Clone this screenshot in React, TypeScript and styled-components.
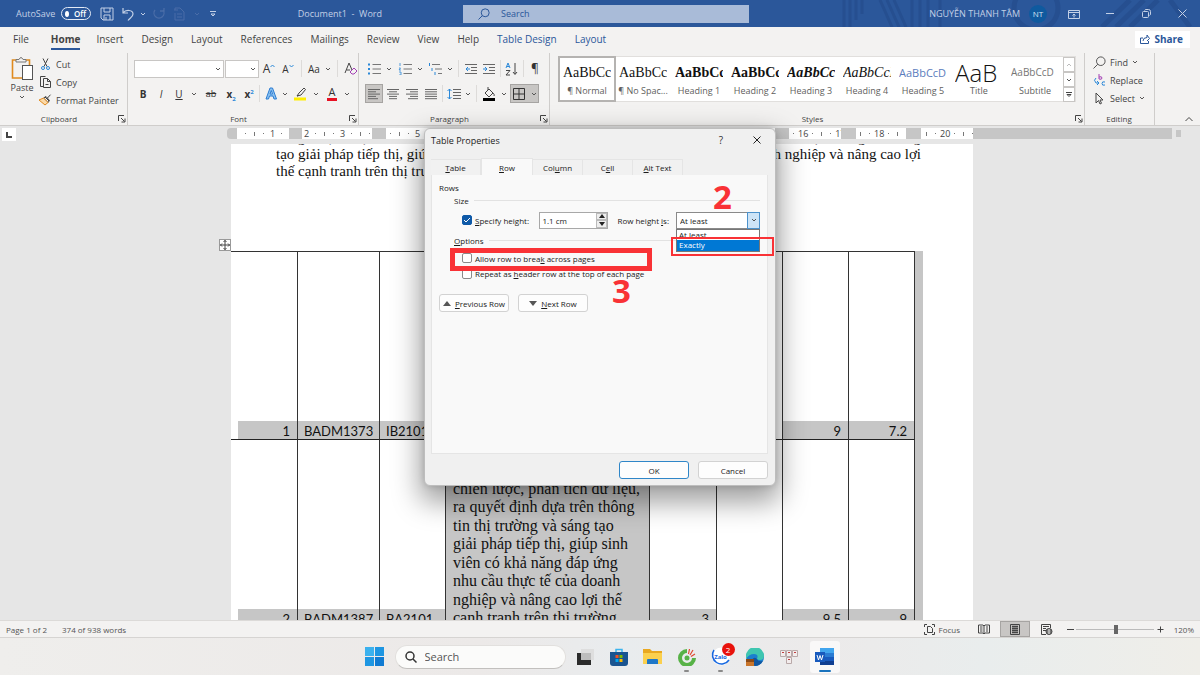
import React from "react";
import styled, { createGlobalStyle, css } from "styled-components";

const ui = `"Open Sans", "Noto Sans", sans-serif`;
const serif = `"Liberation Serif", serif`;

const Global = createGlobalStyle`
  *, *::before, *::after { box-sizing: border-box; }
  html, body, #root { height: 100%; }
  body { margin: 0; font-family: ${ui}; font-size: 9px; color: #444; overflow: hidden; }
  button, input, select { font: inherit; color: inherit; margin: 0; padding: 0; border: 0; background: none; }
  p, ul { margin: 0; padding: 0; list-style: none; }
`;

const Shell = styled.div`
  display: flex;
  flex-direction: column;
  height: 100vh;
`;

/* ---------- title bar ---------- */
const TitleBar = styled.header`
  position: relative;
  display: grid;
  grid-template-columns: 463px minmax(120px, 286px) 1fr;
  align-items: center;
  height: 27px;
  flex: none;
  background: #2b579a;
  color: #c3d0e6;
`;
const TitleArt = styled.svg`
  position: absolute;
  right: 0;
  top: 0;
`;
const QuickAccess = styled.div`
  display: flex;
  align-items: center;
  padding-left: 16px;
`;
const AutoSave = styled.span`
  width: 45px;
`;
const Toggle = styled.button`
  display: flex;
  align-items: center;
  gap: 5px;
  width: 30px;
  height: 13px;
  padding: 0 4px 0 3px;
  margin-right: 6px;
  border: 1px solid #e3eaf5;
  border-radius: 7px;
  color: #fff;
  font-size: 8px;
  font-weight: 600;
  &::before { content: ""; width: 6px; height: 6px; border-radius: 50%; background: #fff; }
`;
const DocName = styled.span`
  margin-left: auto;
  padding-right: 81px;
  white-space: pre;
`;
const SearchBox = styled.label`
  display: flex;
  align-items: center;
  gap: 11px;
  height: 18px;
  padding-left: 15px;
  background: #a9bbd8;
  color: #2b579a;
  input { flex: 1; min-width: 0; outline: 0; }
  input::placeholder { color: #2b579a; opacity: 1; }
`;
const Account = styled.div`
  position: relative;
  display: flex;
  align-items: center;
  justify-content: flex-end;
`;
const Avatar = styled.span`
  display: grid;
  place-items: center;
  width: 18px;
  height: 18px;
  margin: 0 9px;
  border-radius: 50%;
  background: #0f5a9f;
  color: #d5e3f2;
  font-size: 8px;
`;
const Plain = styled.button<{ $w?: number; $h?: number; $on?: boolean }>`
  display: flex;
  align-items: center;
  justify-content: center;
  flex: none;
  width: ${(p) => p.$w ?? 18}px;
  height: ${(p) => p.$h ?? 19}px;
  ${(p) => p.$on && css`background: #c8c6c4; border: 1px solid #a6a4a2;`}
`;

/* ---------- tabs ---------- */
const Ribbon = styled.section`
  flex: none;
  background: #f3f2f1;
  border-bottom: 1px solid #cfcdcb;
`;
const Tabs = styled.nav`
  display: flex;
  align-items: center;
  height: 26px;
  padding: 0 10px 2px 4px;
`;
const Tab = styled.button<{ $active?: boolean; $accent?: boolean }>`
  position: relative;
  height: 24px;
  margin: 0 9px;
  font-size: 10px;
  white-space: nowrap;
  ${(p) => p.$accent && css`color: #2b579a;`}
  ${(p) => p.$active && css`
    font-weight: 700;
    margin-left: 13px;
    margin-right: 7px;
    &::after { content: ""; position: absolute; left: 0; right: 0; bottom: 1px; height: 2px; background: #2b579a; }
  `}
`;
const Share = styled.button`
  display: flex;
  align-items: center;
  gap: 4px;
  height: 17px;
  margin-left: auto;
  padding: 0 7px 0 5px;
  background: #fff;
  color: #2b579a;
  font-size: 10px;
  font-weight: 700;
`;

/* ---------- ribbon groups ---------- */
const Groups = styled.div`
  display: flex;
  height: 72px;
`;
const Group = styled.div<{ $w?: number }>`
  display: flex;
  flex-direction: column;
  justify-content: space-between;
  ${(p) => (p.$w ? css`flex: none; width: ${p.$w}px;` : css`flex: 1; min-width: 0;`)}
  border-right: 1px solid #cfcdcb;
`;
const GroupBody = styled.div<{ $pad?: number }>`
  display: flex;
  flex: 1;
  min-width: 0;
  padding-left: ${(p) => p.$pad ?? 6}px;
`;
const GroupLabel = styled.div`
  display: flex;
  align-items: center;
  height: 13px;
  padding-right: 1px;
  font-size: 8px;
  color: #444;
  span { flex: 1; text-align: center; }
`;
const PasteButton = styled.button`
  display: flex;
  flex-direction: column;
  align-items: center;
  width: 32px;
  padding-top: 3px;
  line-height: 12px;
`;
const Stack = styled.div<{ $pad?: number }>`
  display: flex;
  flex-direction: column;
  padding-top: ${(p) => p.$pad ?? 0}px;
`;
const TextButton = styled.button<{ $end?: number }>`
  display: flex;
  align-items: center;
  gap: 4px;
  height: 18px;
  padding-right: ${(p) => p.$end ?? 0}px;
  white-space: nowrap;
`;
const ToolRow = styled.div`
  display: flex;
  align-items: center;
  height: 25px;
`;
const Sep = styled.i<{ $m?: number }>`
  width: 1px;
  height: 17px;
  margin: 0 ${(p) => p.$m ?? 3}px;
  background: #dddbd9;
`;
const Combo = styled.label<{ $w: number }>`
  display: flex;
  align-items: center;
  width: ${(p) => p.$w}px;
  height: 18px;
  padding-right: 2px;
  margin-right: 1px;
  background: #fff;
  border: 1px solid #c8c6c4;
  input { flex: 1; min-width: 0; outline: 0; }
`;
const Glyph = styled.span<{ $size?: number; $bold?: boolean; $italic?: boolean; $line?: string; $color?: string }>`
  font-size: ${(p) => p.$size ?? 10}px;
  line-height: 12px;
  font-weight: ${(p) => (p.$bold ? 700 : 400)};
  font-style: ${(p) => (p.$italic ? "italic" : "normal")};
  text-decoration: ${(p) => p.$line ?? "none"};
  color: ${(p) => p.$color ?? "#333"};
  sub, sup { font-size: 6px; line-height: 0; color: #2b88d8; }
`;
const InkGlyph = styled(Glyph)<{ $ink: string }>`
  padding: 0 2px;
  border-bottom: 3px solid ${(p) => p.$ink};
`;

const Gallery = styled.div`
  display: flex;
  flex: 1;
  min-width: 0;
  height: 46px;
  margin: 3px 8px 0 0;
  background: #fff;
  border: 1px solid #e1dfdd;
`;
const Swatch = styled.button<{ $on?: boolean }>`
  display: flex;
  flex-direction: column;
  align-items: center;
  flex: 0 0 56px;
  height: 44px;
  overflow: hidden;
  line-height: 14px;
  color: #605e5c;
  ${(p) => p.$on && css`outline: 2px solid #b5b3b1; outline-offset: -1px;`}
`;
const Sample = styled.span<{ $font?: string; $size?: number; $bold?: boolean; $italic?: boolean; $light?: boolean; $color?: string }>`
  width: 48px;
  height: 27px;
  line-height: 31px;
  overflow: hidden;
  text-align: left;
  white-space: nowrap;
  font-family: ${(p) => p.$font ?? serif};
  font-size: ${(p) => p.$size ?? 14}px;
  font-weight: ${(p) => (p.$bold ? 700 : p.$light ? 300 : 400)};
  font-style: ${(p) => (p.$italic ? "italic" : "normal")};
  color: ${(p) => p.$color ?? "#111"};
`;
const GalleryScroll = styled.div`
  display: flex;
  flex-direction: column;
  width: 12px;
  margin-left: auto;
  button { flex: 1; width: 12px; border: 1px solid #c8c6c4; }
`;
const Collapse = styled.div`
  display: flex;
  align-items: flex-end;
  justify-content: flex-end;
  width: 45px;
  padding: 0 6px 1px 0;
`;

/* ---------- document ---------- */
const Workspace = styled.main`
  position: relative;
  flex: 1;
  min-height: 0;
  display: flex;
  flex-direction: column;
  background: #e6e6e6;
`;
const Columns = styled.div`
  display: grid;
  grid-template-columns: calc(50% - 369px) 742px 1fr;
`;
const RulerRow = styled(Columns)`
  height: 18px;
  padding-top: 2px;
  flex: none;
`;
const RulerLeft = styled.div`
  display: flex;
  justify-content: space-between;
  padding-left: 2px;
`;
const TabStop = styled.button`
  width: 14px;
  height: 13px;
  display: grid;
  place-items: center;
  background: #fff;
`;
const RulerNub = styled.i`
  width: 4px;
  height: 11px;
  background: #c6c6c6;
  border-radius: 4px 0 0 4px;
`;
const Ruler = styled.div`
  display: flex;
  height: 11px;
  background: #c6c6c6;
`;
const Seg = styled.span<{ $w?: number; $pad?: number }>`
  display: flex;
  align-items: center;
  height: 11px;
  overflow: hidden;
  ${(p) => (p.$w ? css`flex: none; width: ${p.$w}px;` : css`flex: 1;`)}
  padding-left: ${(p) => p.$pad ?? 0}px;
  background: #fff;
  b { flex: 0 0 9px; display: flex; justify-content: center; font-weight: 400; line-height: 11px; }
  b.bar::before { content: ""; width: 1px; height: 4px; background: #777; }
  b.dot::before { content: ""; width: 1px; height: 1px; background: #777; }
`;
const Margin = styled.i<{ $w: number }>`
  flex: 0 0 ${(p) => p.$w}px;
`;
const RulerRight = styled.div`
  display: flex;
  gap: 4px;
  padding-right: 19px;
  &::before { content: ""; flex: 1; height: 11px; background: #c6c6c6; }
  &::after { content: ""; width: 5px; height: 7px; margin-top: 2px; background: #c6c6c6; }
`;
const PageArea = styled(Columns)`
  flex: 1;
  min-height: 0;
`;
const Page = styled.article`
  grid-column: 2;
  position: relative;
  min-height: 0;
  background: #fff;
`;
const PageClip = styled.div`
  height: 100%;
  overflow: hidden;
`;
const Para = styled.div`
  width: 645px;
  margin: -15px 0 71px 45px;
  font-family: ${serif};
  font-size: 15px;
  line-height: 17px;
  color: #111;
  p { white-space: nowrap; text-align-last: justify; }
  p:last-child { text-align-last: left; }
`;
const MoveHandle = styled.button`
  position: absolute;
  left: -12px;
  top: 95px;
  width: 12px;
  height: 12px;
  display: grid;
  place-items: center;
  background: #fff;
  border: 1px solid #999;
`;
const Grid = styled.table`
  table-layout: fixed;
  width: 692px;
  border-spacing: 0;
  font-family: Lato, "Noto Sans", sans-serif;
  font-size: 13px;
  color: #111;
  td { height: 188px; padding: 0; vertical-align: bottom; border-right: 1px solid #333; border-bottom: 1px solid #222; }
  tr:first-child td { height: 189px; border-top: 1px solid #333; }
  td.end { border: 0; background: #c6c6c6; }
  tr:first-child td.end { border: 0; }
`;
const Strip = styled.div<{ $num?: boolean; $indent?: boolean }>`
  height: 18px;
  margin-left: ${(p) => (p.$indent ? 7 : 0)}px;
  padding: 0 7px 0 6px;
  line-height: 20px;
  background: #c6c6c6;
  white-space: nowrap;
  text-align: ${(p) => (p.$num ? "right" : "left")};
`;
const LongCell = styled.td`
  background: #c6c6c6;
  p { padding-left: 7px; font-family: ${serif}; font-size: 16px; line-height: 19px; white-space: nowrap; }
  p:nth-child(even) { line-height: 18px; }
`;

/* ---------- dialog ---------- */
const Dialog = styled.section`
  position: absolute;
  top: 2px;
  left: calc(50% - 176px);
  width: 352px;
  display: flex;
  flex-direction: column;
  padding: 0 7px 6px 6px;
  background: #f0f0f0;
  border-radius: 6px;
  border: 1px solid #bdbdbd;
  box-shadow: 0 12px 28px 4px rgba(0, 0, 0, 0.38), 0 0 6px rgba(0, 0, 0, 0.15);
  color: #1b1b1b;
`;
const DialogHead = styled.header`
  display: flex;
  align-items: center;
  height: 22px;
  margin-bottom: 7px;
  h2 { flex: 1; margin: 0; font-size: 9px; font-weight: 400; }
`;
const DialogTabs = styled.div`
  display: flex;
  align-items: flex-end;
`;
const DialogTab = styled.button<{ $on?: boolean }>`
  width: ${(p) => (p.$on ? 52 : 50)}px;
  height: ${(p) => (p.$on ? 17 : 16)}px;
  font-size: 8px;
  background: ${(p) => (p.$on ? "#f9f9f9" : "#f1f1f1")};
  border: 1px solid #e5e5e5;
  border-bottom: 0;
  border-left-width: ${(p) => (p.$on ? 1 : 0)}px;
`;
const Panel = styled.div`
  height: 279px;
  padding: 6px 7px;
  background: #f9f9f9;
  border: 1px solid #e5e5e5;
  border-top: 0;
  font-size: 8px;
`;
const Legend = styled.div<{ $in?: boolean; $h?: number }>`
  display: flex;
  align-items: center;
  gap: 5px;
  height: ${(p) => p.$h ?? 13}px;
  padding-left: ${(p) => (p.$in ? 15 : 0)}px;
  ${(p) => p.$in && css`&::after { content: ""; flex: 1; height: 1px; background: #e2e2e2; }`}
`;
const FieldRow = styled.div<{ $h: number }>`
  display: flex;
  align-items: center;
  height: ${(p) => p.$h}px;
  padding-left: 23px;
`;
const Check = styled.label<{ $w?: number }>`
  display: flex;
  align-items: center;
  gap: 3px;
  ${(p) => p.$w && css`width: ${p.$w}px;`}
  white-space: nowrap;
  input {
    appearance: none;
    width: 10px;
    height: 10px;
    background: #fff;
    border: 1px solid #8a8a8a;
    border-radius: 2px;
  }
  input:checked {
    background: #0f5aa8 url("data:image/svg+xml,%3Csvg xmlns='http://www.w3.org/2000/svg' viewBox='0 0 10 10'%3E%3Cpath d='M2 5l2 2 4-4' fill='none' stroke='white'/%3E%3C/svg%3E") center / 10px no-repeat;
    border-color: #0f5aa8;
  }
`;
const Spin = styled.div`
  display: flex;
  width: 69px;
  height: 17px;
  margin-right: 9px;
  background: #fff;
  border: 1px solid #a8a8a8;
  input { width: 56px; padding-left: 2px; outline: 0; }
`;
const SpinButtons = styled.div`
  display: flex;
  flex-direction: column;
  width: 12px;
  button { flex: 1; display: grid; place-items: center; background: #eee; border: 1px solid #bbb; min-height: 0; }
`;
const RowLabel = styled.label`
  width: 59px;
  white-space: nowrap;
`;
const Drop = styled.div`
  position: relative;
  flex: none;
  width: 84px;
  height: 17px;
  background: #fff;
  border: 1px solid #8a8a8a;
  select { appearance: none; width: 100%; height: 15px; padding-left: 3px; outline: 0; }
`;
const DropArrow = styled.span`
  position: absolute;
  right: -1px;
  top: -1px;
  width: 13px;
  height: 17px;
  display: grid;
  place-items: center;
  background: #cde4f7;
  border: 1px solid #4c92cc;
  pointer-events: none;
`;
const DropList = styled.ul`
  position: absolute;
  left: -1px;
  right: -1px;
  top: 16px;
  height: 23px;
  background: #fff;
  border: 1px solid #777;
  li { height: 10px; padding-left: 2px; line-height: 10px; overflow: hidden; }
  li + li { height: 11px; background: #0078d4; color: #fff; }
`;
const NavButtons = styled.div`
  display: flex;
  gap: 9px;
  padding-top: 15px;
`;
const WinButton = styled.button<{ $primary?: boolean }>`
  display: flex;
  align-items: center;
  justify-content: center;
  gap: 4px;
  width: 70px;
  height: 18px;
  background: #fdfdfd;
  border: 1px solid ${(p) => (p.$primary ? "#2f86c8" : "#d2d2d2")};
  border-radius: 3px;
  font-size: 8px;
`;
const DialogFoot = styled.footer`
  display: flex;
  justify-content: flex-end;
  gap: 9px;
  padding-top: 7px;
`;
const Outline = styled.i<{ $x: number; $y: number; $w: number; $h: number; $b: number }>`
  position: absolute;
  left: ${(p) => p.$x}px;
  top: ${(p) => p.$y}px;
  width: ${(p) => p.$w}px;
  height: ${(p) => p.$h}px;
  border: ${(p) => p.$b}px solid #f93236;
  pointer-events: none;
`;
const StepMark = styled.strong<{ $x: number; $y: number }>`
  position: absolute;
  left: ${(p) => p.$x}px;
  top: ${(p) => p.$y}px;
  color: #f93236;
  font-size: 33px;
  line-height: 36px;
  font-weight: 700;
`;

/* ---------- status bar and taskbar ---------- */
const Status = styled.footer`
  display: flex;
  align-items: center;
  flex: none;
  height: 18px;
  padding: 0 6px;
  background: #f3f2f1;
  border-bottom: 1px solid #d6d4d2;
  border-top: 1px solid #dcdad8;
  font-size: 8px;
  color: #555;
`;
const Words = styled.span`
  margin: 0 auto 0 15px;
`;
const Zoom = styled.input`
  appearance: none;
  width: 78px;
  height: 10px;
  background: linear-gradient(#bbb, #bbb) center / 100% 1px no-repeat;
  &::-webkit-slider-thumb { appearance: none; width: 4px; height: 9px; background: #666; }
`;
const Percent = styled.span`
  width: 27px;
  text-align: right;
`;
const Taskbar = styled.nav`
  display: flex;
  align-items: center;
  justify-content: center;
  flex: none;
  height: 37px;
  padding-left: 4px;
  background: linear-gradient(90deg, #efeeec 0%, #ece9e8 40%, #e9ecee 52%, #eceaea 68%, #e9eded 82%, #efeee9 100%);
`;
const TaskSearch = styled.label`
  display: flex;
  align-items: center;
  gap: 8px;
  width: 171px;
  height: 24px;
  margin: 0 2px 0 11px;
  padding-left: 9px;
  background: #fbfbfa;
  border: 1px solid #e2e0de;
  border-bottom-color: #c2c0be;
  border-radius: 12px;
  font-size: 11px;
  input { flex: 1; min-width: 0; outline: 0; }
  input::placeholder { color: #555; opacity: 1; }
`;
const TaskApp = styled.button<{ $state?: "open" | "active" }>`
  position: relative;
  display: grid;
  place-items: center;
  flex: none;
  width: 34px;
  height: 32px;
  ${(p) => p.$state === "active" && css`
    width: 30px;
    margin-left: 4px;
    background: #f9f8f8;
    border-radius: 3px;
  `}
  ${(p) => p.$state && css`
    &::after {
      content: "";
      position: absolute;
      bottom: 1px;
      width: ${p.$state === "active" ? 12 : 5}px;
      height: 2px;
      border-radius: 1px;
      background: ${p.$state === "active" ? "#1a73bd" : "#8a8a8a"};
    }
  `}
`;
const Badge = styled.span`
  position: absolute;
  right: 3px;
  top: 2px;
  width: 13px;
  height: 13px;
  border-radius: 50%;
  background: #e8120c;
  color: #fff;
  font-size: 8px;
  line-height: 13px;
`;
const ZaloName = styled.span`
  position: absolute;
  font-size: 6px;
  font-weight: 700;
  color: #1567e0;
`;

/* ---------- drawings ---------- */
type IconProps = { w: number; h: number; c?: string; sw?: number; children: React.ReactNode };
const Icon = ({ w, h, c = "#444", sw = 1, children }: IconProps) => (
  <svg width={w} height={h} viewBox={`0 0 ${w} ${h}`} fill="none" stroke={c} strokeWidth={sw} aria-hidden="true">
    {children}
  </svg>
);
const Chevron = ({ c = "#555" }: { c?: string }) => (
  <Icon w={6} h={6} c={c}><path d="M1 2l2 2 2-2" /></Icon>
);
const Launcher = () => (
  <Icon w={8} h={8}><path d="M.5 6V.5H6M3 3l3.500 3.500M7 3.500V7H3.500" /></Icon>
);
const Lens = ({ c = "#2b579a", size = 12 }: { c?: string; size?: number }) => (
  <Icon w={size} h={size} c={c}><circle cx={size * 0.6} cy={size * 0.4} r={size * 0.33} /><path d={`M${size * 0.37} ${size * 0.63}L.5 ${size - 0.5}`} /></Icon>
);
const Lines = ({ rows }: { rows: [number, number][] }) => (
  <Icon w={12} h={12} c="#666"><path d={rows.map(([a, b], i) => `M${a} ${1.5 + i * 2.3}H${b}`).join("")} /></Icon>
);
const bulletLines = "M5.500 1.500H14M5.500 6H14M5.500 10.500H14";

const Key = ({ label }: { label: string }) => {
  const letter = label.charAt(0);
  return <><u>{letter}</u>{label.slice(1)}</>;
};

const ribbonTabs: { name: string; active?: boolean; accent?: boolean }[] = [
  { name: "File" }, { name: "Home", active: true }, { name: "Insert" }, { name: "Design" }, { name: "Layout" },
  { name: "References" }, { name: "Mailings" }, { name: "Review" }, { name: "View" }, { name: "Help" },
  { name: "Table Design", accent: true }, { name: "Layout", accent: true },
];

type StyleItem = {
  name: string; text: string; on?: boolean; bold?: boolean; italic?: boolean;
  light?: boolean; font?: string; size?: number; color?: string;
};
const styleList: StyleItem[] = [
  { name: "¶ Normal", text: "AaBbCc", on: true },
  { name: "¶ No Spac...", text: "AaBbCc" },
  { name: "Heading 1", text: "AaBbCc", bold: true },
  { name: "Heading 2", text: "AaBbCc", bold: true },
  { name: "Heading 3", text: "AaBbCc", bold: true, italic: true },
  { name: "Heading 4", text: "AaBbCcD", italic: true },
  { name: "Heading 5", text: "AaBbCcD", font: ui, size: 11, color: "#5b7dbd" },
  { name: "Title", text: "AaB", font: ui, size: 24, light: true },
  { name: "Subtitle", text: "AaBbCcD", font: ui, size: 10, color: "#767676" },
];

const longText = [
  "chiến lược, phân tích dữ liệu,",
  "ra quyết định dựa trên thông",
  "tin thị trường và sáng tạo",
  "giải pháp tiếp thị, giúp sinh",
  "viên có khả năng đáp ứng",
  "nhu cầu thực tế của doanh",
  "nghiệp và nâng cao lợi thế",
  "cạnh tranh trên thị trường",
];

const Marks = ({ text }: { text: string }) => (
  <>
    {text.split(" ").map((m, i) =>
      m === "." ? <b key={i} className="dot" /> : m === "|" ? <b key={i} className="bar" /> : <b key={i}>{m}</b>
    )}
  </>
);

const Title = () => (
  <TitleBar>
    <TitleArt width="360" height="27" viewBox="0 0 360 27" fill="none" stroke="#264f90" aria-hidden="true">
      <path d="M4 0v27M10 0v27M16 0v20M22 0v14M40 0l12 27M47 0l12 27M54 0l12 27M72 0v27M80 0v27M88 0v27M100 0v27" strokeWidth="3" />
      <circle cx="196" cy="8" r="22" strokeWidth="5" /><path d="M262 27l28-27M276 27l28-27M290 27l28-27M330 0l20 27" strokeWidth="5" />
    </TitleArt>
    <QuickAccess>
      <AutoSave>AutoSave</AutoSave>
      <Toggle aria-label="AutoSave">Off</Toggle>
      <Plain $w={20} aria-label="Save"><Icon w={14} h={14} c="#c3d0e6"><path d="M1 1h12v12H3l-2-2zM4 1v4h6V1M4 13V8h6v5M6 10v3" /></Icon></Plain>
      <Plain $w={22} aria-label="Undo"><Icon w={14} h={14} c="#c3d0e6" sw={1.2}><path d="M2 1v5h5M2 6c3-4 10-3 10 1 0 3-3 4-5 6.500" /></Icon></Plain>
      <Plain $w={8} aria-label="Undo list"><Chevron c="#c3d0e6" /></Plain>
      <Plain $w={24} aria-label="Redo"><Icon w={14} h={14} c="#4a6da8" sw={1.3}><path d="M3 3a5 5 0 1 0 8 0M12 1v3H8" /></Icon></Plain>
      <Plain $w={18} aria-label="Open"><Icon w={12} h={14} c="#4a6da8"><path d="M1 3V1h5l4 4v8H1V6M3 7h5M3 10h5M0 3h4" /></Icon></Plain>
      <Plain $w={16} aria-label="Open list"><Chevron c="#4a6da8" /></Plain>
      <Plain $w={16} aria-label="Customize"><Icon w={8} h={8} c="#c3d0e6"><path d="M1 1.500h6M2 4l2 2 2-2z" /></Icon></Plain>
      <DocName>{"Document1  -  Word"}</DocName>
    </QuickAccess>
    <SearchBox><Lens /><input placeholder="Search" aria-label="Search" /></SearchBox>
    <Account>
      <span>NGUYỄN THANH TÂM</span>
      <Avatar>NT</Avatar>
      <Plain $w={36} aria-label="Ribbon display"><Icon w={12} h={10} c="#c3d0e6"><path d="M.5 1.500h11v8H.5zM.5 3.500h11M6 8.500V5M4.500 6.500L6 5l1.500 1.500" /></Icon></Plain>
      <Plain $w={36} aria-label="Minimize"><Icon w={8} h={8} c="#c3d0e6"><path d="M0 3.500h8" /></Icon></Plain>
      <Plain $w={36} aria-label="Restore"><Icon w={9} h={9} c="#c3d0e6"><rect x=".5" y="2.500" width="6" height="6" rx="1" /><path d="M2.500 1.500Q3 .5 4 .5h2.500q2 0 2 2V5q0 1-1 1.500" /></Icon></Plain>
      <Plain $w={36} aria-label="Close"><Icon w={9} h={9} c="#c3d0e6"><path d="M.5.5l8 8M8.500.5l-8 8" /></Icon></Plain>
    </Account>
  </TitleBar>
);

const Clipboard = () => (
  <Group $w={128}>
    <GroupBody>
      <PasteButton>
        <Icon w={24} h={26} c="#e08a1e" sw={1.6}>
          <path d="M7 4H2.500v18H12M16 4h3.500v5" />
          <path d="M6 6V3.500h3q2-4 4 0h3V6z" stroke="#777" strokeWidth="1" fill="#f3f2f1" />
          <rect x="12.500" y="9.500" width="10" height="14" stroke="#555" strokeWidth="1" fill="#fff" />
        </Icon>
        Paste
        <Chevron />
      </PasteButton>
      <Stack $pad={2}>
        <TextButton><Icon w={14} h={12}><path d="M5 .5l4 8M10 .5l-4 8" /><circle cx="5" cy="10" r="1.500" stroke="#2b88d8" /><circle cx="10" cy="10" r="1.500" stroke="#2b88d8" /></Icon>Cut</TextButton>
        <TextButton><Icon w={14} h={12}><path d="M5 10.500H2.500v-10h5M5.500 2.500h4l3 3v6h-7zM9.500 2.500v3h3M7.500 8.500h3" /></Icon>Copy</TextButton>
        <TextButton><Icon w={14} h={12}><path d="M7 3l4 4M9 4.500L12.500.7M5.500 4L8 2.500l3.500 4L10 8.500z" /><path d="M5.500 4L1 6l6 5 3-2.500z" stroke="#e08a1e" fill="#fbd9a8" /></Icon>Format Painter</TextButton>
      </Stack>
    </GroupBody>
    <GroupLabel><span>Clipboard</span><Launcher /></GroupLabel>
  </Group>
);

const FontGroup = () => (
  <Group $w={231}>
    <GroupBody>
      <Stack $pad={3}>
        <ToolRow>
          <Combo $w={90}><input aria-label="Font" /><Chevron /></Combo>
          <Combo $w={34}><input aria-label="Font size" /><Chevron /></Combo>
          <Plain aria-label="Grow font"><Glyph $size={12}>A</Glyph><Icon w={5} h={9} c="#2b88d8"><path d="M.5 3l2-2 2 2" /></Icon></Plain>
          <Plain $w={20} aria-label="Shrink font"><Glyph>A</Glyph><Icon w={5} h={9} c="#2b88d8"><path d="M.5 1l2 2 2-2" /></Icon></Plain>
          <Sep />
          <Plain $w={18} aria-label="Change case"><Glyph>Aa</Glyph></Plain>
          <Plain $w={10} aria-label="Case list"><Chevron /></Plain>
          <Sep $m={4} />
          <Plain aria-label="Clear formatting"><Icon w={14} h={14}><path d="M1 11L5 1l3 7M2.500 8H6" /><path d="M6 10l4-4 3 3-3 3H8z" stroke="#a33fb5" /></Icon></Plain>
        </ToolRow>
        <ToolRow>
          <Plain><Glyph $bold>B</Glyph></Plain>
          <Plain><Glyph $italic>I</Glyph></Plain>
          <Plain><Glyph $line="underline">U</Glyph></Plain>
          <Plain $w={12} aria-label="Underline list"><Chevron /></Plain>
          <Plain $w={22}><Glyph $line="line-through" $size={9}>ab</Glyph></Plain>
          <Plain><Glyph $bold>x<sub>2</sub></Glyph></Plain>
          <Plain><Glyph $bold>x<sup>2</sup></Glyph></Plain>
          <Sep $m={1} />
          <Plain $w={20} aria-label="Text effects"><Icon w={13} h={13} c="#2b7cd3"><path d="M1 12L5 1h2.500l4 11H9L8 9H4.500l-1 3zM5 7h2.500L6.300 3.500z" fill="#8cc2f0" /></Icon></Plain>
          <Plain $w={8} aria-label="Effects list"><Chevron /></Plain>
          <Plain $w={22} aria-label="Highlight"><Icon w={14} h={14}><path d="M4 9l2-3 5-5 1.500 1.500L8 8zM4 9l1.500-.5" /><path d="M1 12h12" stroke="#ffee00" strokeWidth="3" /></Icon></Plain>
          <Plain $w={10} aria-label="Highlight list"><Chevron /></Plain>
          <Plain $w={22}><InkGlyph $ink="#e81123" $size={11}>A</InkGlyph></Plain>
          <Plain $w={8} aria-label="Color list"><Chevron /></Plain>
        </ToolRow>
      </Stack>
    </GroupBody>
    <GroupLabel><span>Font</span><Launcher /></GroupLabel>
  </Group>
);

const ParagraphGroup = () => (
  <Group $w={191}>
    <GroupBody>
      <Stack $pad={3}>
        <ToolRow>
          <Plain aria-label="Bullets"><Icon w={14} h={12} c="#777"><path d={bulletLines} /><path d="M1 1.500h2M1 6h2M1 10.500h2" stroke="#2b88d8" strokeWidth="2" /></Icon></Plain>
          <Plain $w={12} aria-label="Bullets list"><Chevron /></Plain>
          <Plain $w={20} aria-label="Numbering"><Icon w={14} h={12} c="#777"><path d={bulletLines} /><path d="M2 0v3M1 5h1.500L1 7h2M1 9h2v3H1" stroke="#2b88d8" strokeWidth=".8" /></Icon></Plain>
          <Plain $w={10} aria-label="Numbering list"><Chevron /></Plain>
          <Plain $w={20} aria-label="Multilevel"><Icon w={14} h={12} c="#777"><path d="M4 1.500h8M7 6h7M10 10.500h4" /><path d="M1.500 0v3M4 5v3M7 9v3" stroke="#2b88d8" /></Icon></Plain>
          <Plain $w={10} aria-label="Multilevel list"><Chevron /></Plain>
          <Sep />
          <Plain aria-label="Outdent"><Icon w={12} h={11} c="#666"><path d="M0 1.500h12M6 4.500h6M6 7.500h6M0 10.500h12" /><path d="M5 6H1M3 4L1 6l2 2" stroke="#2b88d8" /></Icon></Plain>
          <Plain aria-label="Indent"><Icon w={12} h={11} c="#666"><path d="M0 1.500h12M6 4.500h6M6 7.500h6M0 10.500h12" /><path d="M0 6h4M2 4l2 2-2 2" stroke="#2b88d8" /></Icon></Plain>
          <Sep $m={2} />
          <Plain aria-label="Sort"><Icon w={14} h={14}><path d="M1 6l2-5 2 5M2 4.500h2" stroke="#2b88d8" /><path d="M1 8.500h4L1 13h4M10 1v11M8 10l2 2.500 2-2.500" /></Icon></Plain>
          <Sep $m={2} />
          <Plain><Glyph $size={12}>¶</Glyph></Plain>
        </ToolRow>
        <ToolRow>
          <Plain $on aria-label="Align left"><Lines rows={[[0, 12], [0, 8], [0, 12], [0, 8], [0, 10]]} /></Plain>
          <Plain $w={19} aria-label="Center"><Lines rows={[[0, 12], [2, 10], [0, 12], [2, 10], [2, 10]]} /></Plain>
          <Plain $w={19} aria-label="Align right"><Lines rows={[[0, 12], [4, 12], [0, 12], [4, 12], [2, 12]]} /></Plain>
          <Plain $w={19} aria-label="Justify"><Lines rows={[[0, 12], [0, 12], [0, 12], [0, 12], [0, 12]]} /></Plain>
          <Sep $m={2} />
          <Plain aria-label="Line spacing"><Icon w={14} h={12} c="#666"><path d="M6 1.500h8M6 4.500h8M6 7.500h8M6 10.500h8" /><path d="M2.500 1v10M.5 3l2-2 2 2M.5 9l2 2 2-2" stroke="#2b88d8" /></Icon></Plain>
          <Plain $w={10} aria-label="Spacing list"><Chevron /></Plain>
          <Sep $m={3} />
          <Plain aria-label="Shading"><Icon w={14} h={14}><path d="M3 6l4-4 4 4-4 4zM6 3V0M11 6q2 2 1 3" /><path d="M1 12.500h12" stroke="#000" strokeWidth="3" /></Icon></Plain>
          <Plain $w={12} aria-label="Shading list"><Chevron /></Plain>
          <Plain $w={29} $on aria-label="Borders"><Icon w={18} h={12} c="#333"><path d="M.5.5h11v11H.5zM6 .5v11M.5 6h11" /></Icon><Chevron /></Plain>
        </ToolRow>
      </Stack>
    </GroupBody>
    <GroupLabel><span>Paragraph</span><Launcher /></GroupLabel>
  </Group>
);

const Styles = () => (
  <Group>
    <GroupBody $pad={8}>
      <Gallery>
        {styleList.map((s) => (
          <Swatch key={s.name} $on={s.on}>
            <Sample $font={s.font} $size={s.size} $bold={s.bold} $italic={s.italic} $light={s.light} $color={s.color}>{s.text}</Sample>
            {s.name}
          </Swatch>
        ))}
        <GalleryScroll>
          <button aria-label="Previous styles"><Icon w={6} h={6} c="#bbb"><path d="M1 4l2-2 2 2" /></Icon></button>
          <button aria-label="Next styles"><Chevron /></button>
          <button aria-label="All styles"><Icon w={6} h={7}><path d="M0 1.500h6M1 3.500l2 2 2-2z" /></Icon></button>
        </GalleryScroll>
      </Gallery>
    </GroupBody>
    <GroupLabel><span>Styles</span><Launcher /></GroupLabel>
  </Group>
);

const Editing = () => (
  <Group $w={70}>
    <GroupBody $pad={8}>
      <Stack>
        <TextButton><Lens c="#555" size={13} />Find<Chevron /></TextButton>
        <TextButton><Icon w={13} h={13} c="#2b88d8"><path d="M3 4q-3 2 0 5h3M4 7l2 2-2 2M12 8q-3-1-3 1.500t3 1.500" /><path d="M6 0v5M6 3q3-1 3 1t-3 1" stroke="#a33fb5" /></Icon>Replace</TextButton>
        <TextButton><Icon w={13} h={13}><path d="M3 1v10l2.500-2.500L7 12l1.500-.7L7 8h3z" /></Icon>Select<Chevron /></TextButton>
      </Stack>
    </GroupBody>
    <GroupLabel><span>Editing</span></GroupLabel>
  </Group>
);

const TableProperties = () => (
  <Dialog role="dialog" aria-label="Table Properties">
    <DialogHead>
      <h2>Table Properties</h2>
      <Plain $w={50}><Glyph>?</Glyph></Plain>
      <Plain $w={22} aria-label="Close"><Icon w={8} h={8} c="#222"><path d="M.5.5l7 7M7.500.5l-7 7" /></Icon></Plain>
    </DialogHead>
    <DialogTabs>
      <DialogTab><Key label="Table" /></DialogTab>
      <DialogTab $on><Key label="Row" /></DialogTab>
      <DialogTab>Col<u>u</u>mn</DialogTab>
      <DialogTab>C<u>e</u>ll</DialogTab>
      <DialogTab><Key label="Alt Text" /></DialogTab>
    </DialogTabs>
    <Panel>
      <Legend>Rows</Legend>
      <Legend $in>Size</Legend>
      <FieldRow $h={26}>
        <Check $w={78}><input type="checkbox" defaultChecked /><span><Key label="Specify height:" /></span></Check>
        <Spin>
          <input defaultValue="1.1 cm" aria-label="Height" />
          <SpinButtons>
            <button aria-label="Increase"><Icon w={6} h={4} c="none"><path d="M0 4l3-4 3 4z" fill="#222" /></Icon></button>
            <button aria-label="Decrease"><Icon w={6} h={4} c="none"><path d="M0 0l3 4 3-4z" fill="#222" /></Icon></button>
          </SpinButtons>
        </Spin>
        <RowLabel htmlFor="rule">Row height <u>i</u>s:</RowLabel>
        <Drop>
          <select id="rule"><option>At least</option></select>
          <DropArrow><Chevron /></DropArrow>
          <DropList role="listbox"><li role="option">At least</li><li role="option" aria-selected="true">Exactly</li></DropList>
        </Drop>
      </FieldRow>
      <Legend $in $h={15}><span><Key label="Options" /></span></Legend>
      <FieldRow $h={20}><Check><input type="checkbox" /><span>Allow row to brea<u>k</u> across pages</span></Check></FieldRow>
      <FieldRow $h={11}><Check><input type="checkbox" /><span>Repeat as <u>h</u>eader row at the top of each page</span></Check></FieldRow>
      <NavButtons>
        <WinButton><Icon w={8} h={5} c="none"><path d="M0 5l4-5 4 5z" fill="#555" /></Icon><span><Key label="Previous Row" /></span></WinButton>
        <WinButton><Icon w={8} h={5} c="none"><path d="M0 0l4 5 4-5z" fill="#555" /></Icon><span><Key label="Next Row" /></span></WinButton>
      </NavButtons>
    </Panel>
    <DialogFoot>
      <WinButton $primary>OK</WinButton>
      <WinButton>Cancel</WinButton>
    </DialogFoot>
    <Outline $x={25} $y={119} $w={202} $h={23} $b={5} />
    <Outline $x={246} $y={108} $w={103} $h={19} $b={2} />
    <StepMark $x={288} $y={50}>2</StepMark>
    <StepMark $x={187} $y={144}>3</StepMark>
  </Dialog>
);

const Num = ({ children, indent }: { children?: React.ReactNode; indent?: boolean }) => (
  <td><Strip $num $indent={indent}>{children}</Strip></td>
);
const Text = ({ children }: { children?: React.ReactNode }) => <td><Strip>{children}</Strip></td>;

const Document = () => (
  <Workspace>
    <RulerRow>
      <RulerLeft>
        <TabStop aria-label="Tab stop"><Icon w={6} h={6} sw={2}><path d="M1 0v5h5" /></Icon></TabStop>
        <RulerNub />
      </RulerLeft>
      <Ruler>
        <Margin $w={6} />
        <Seg $w={52} $pad={4}><Marks text=". | . 1 ." /></Seg>
        <Margin $w={13} />
        <Seg $w={70}><Marks text="2 . | . 3 . | ." /></Seg>
        <Margin $w={14} />
        <Seg><Marks text=". | . 5 ." /></Seg>
        <Margin $w={14} />
        <Seg $w={52}><Marks text=". 16 . | . 17" /></Seg>
        <Margin $w={15} />
        <Seg $w={50}><Marks text="| . 18 . | ." /></Seg>
        <Margin $w={15} />
        <Seg $w={52} $pad={1}><Marks text="| . 20 . | ." /></Seg>
      </Ruler>
      <RulerRight />
    </RulerRow>
    <PageArea>
      <Page>
        <PageClip>
          <Para>
            <p>năng hoạch định chiến lược, phân tích dữ liệu, ra quyết định dựa trên thông tin thị trường và sáng</p>
            <p>tạo giải pháp tiếp thị, giúp sinh viên có khả năng đáp ứng nhu cầu thực tế của doanh nghiệp và nâng cao lợi</p>
            <p>thế cạnh tranh trên thị trường.</p>
          </Para>
          <Grid>
            <colgroup>
              {[67, 82, 66, 204, 67, 66, 66, 66, 8].map((w, i) => <col key={i} width={w} />)}
            </colgroup>
            <tbody>
              <tr>
                <Num indent>1</Num><Text>BADM1373</Text><Text>IB2101</Text><LongCell /><Num /><td /><Num>9</Num><Num>7.2</Num><td className="end" />
              </tr>
              <tr>
                <Num indent>2</Num><Text>BADM1387</Text><Text>BA2101</Text>
                <LongCell>{longText.map((t) => <p key={t}>{t}</p>)}</LongCell>
                <Num>3</Num><td /><Num>9.5</Num><Num>9</Num><td className="end" />
              </tr>
            </tbody>
          </Grid>
        </PageClip>
        <MoveHandle aria-label="Move table"><Icon w={10} h={10}><path d="M5 0v10M0 5h10M3.500 2L5 .5 6.500 2M3.500 8L5 9.500 6.500 8M2 3.500L.5 5 2 6.500M8 3.500L9.500 5 8 6.500" /></Icon></MoveHandle>
      </Page>
    </PageArea>
    <TableProperties />
  </Workspace>
);

const StatusBar = () => (
  <Status>
    <span>Page 1 of 2</span>
    <Words>374 of 938 words</Words>
    <TextButton $end={8}><Icon w={11} h={11}><path d="M.5 3V.5H3M8 .5h2.500V3M.5 8v2.500H3M8 10.500h2.500V8M3.500 2.500h3l2 2v4h-5z" /></Icon>Focus</TextButton>
    <Plain $w={32} aria-label="Read mode"><Icon w={12} h={10}><path d="M.5 1h4.500l1 1 1-1h4.500v8H7L6 10 5 9H.5zM6 2v7M2 3h2.500M2 5h2.500M2 7h2.500M8 3h2M8 5h2M8 7h2" /></Icon></Plain>
    <Plain $w={30} $h={16} $on aria-label="Print layout"><Icon w={10} h={11}><path d="M.5.5h9v10h-9z" /><path d="M2 2.500h6M2 4.500h6M2 6.500h6M2 8.500h6" strokeWidth="1.500" /></Icon></Plain>
    <Plain $w={34} aria-label="Web layout"><Icon w={12} h={11}><path d="M5 10.500H.5V.5h9V4M2 2.500h6M2 4.500h3M2 6.500h3" /><circle cx="8" cy="7.500" r="3" fill="#777" /><path d="M8 5v5" stroke="#eee" /></Icon></Plain>
    <Plain $w={12} aria-label="Zoom out"><Icon w={7} h={7}><path d="M0 3.500h7" /></Icon></Plain>
    <Zoom type="range" min={0} max={100} defaultValue={52} aria-label="Zoom" />
    <Plain $w={13} aria-label="Zoom in"><Icon w={7} h={7}><path d="M.5 3.500h6M3.500.5v6" /></Icon></Plain>
    <Percent>120%</Percent>
  </Status>
);

const TaskRow = () => (
  <Taskbar>
    <Plain $w={19} aria-label="Start">
      <Icon w={19} h={19} c="none"><path d="M0 0h9v9H0z" fill="#3bb1ee" /><path d="M10 0h9v9h-9zM0 10h9v9H0z" fill="#1e96e2" /><path d="M10 10h9v9h-9z" fill="#0f7ad2" /></Icon>
    </Plain>
    <TaskSearch>
      <Icon w={12} h={12} c="#333" sw={1.5}><circle cx="5" cy="5" r="4" /><path d="M8 8l3.500 3.500" /></Icon>
      <input placeholder="Search" aria-label="Search Windows" />
    </TaskSearch>
    <TaskApp aria-label="Task view"><Icon w={18} h={18} c="none"><path d="M5 1h13v11H5z" fill="#dedede" /><path d="M1 5h14v12H1z" fill="#2b2b2b" /><path d="M5 5h10v7H5z" fill="#bdbdbd" /></Icon></TaskApp>
    <TaskApp aria-label="Store"><Icon w={18} h={18} c="none"><path d="M6 4V1.500h6V4" stroke="#3cb4ee" strokeWidth="1.500" /><path d="M0 4h18v11q0 3-3 3H3q-3 0-3-3z" fill="#1a5490" /><path d="M5.500 7h3v3h-3z" fill="#f25022" /><path d="M9.500 7h3v3h-3z" fill="#7fba00" /><path d="M5.500 11h3v3h-3z" fill="#00a4ef" /><path d="M9.500 11h3v3h-3z" fill="#ffb900" /></Icon></TaskApp>
    <TaskApp aria-label="Explorer"><Icon w={19} h={17} c="none"><path d="M0 1h7l2 2h10v13H0z" fill="#e9a820" /><path d="M0 5h19v11H0z" fill="#fbd04e" /><path d="M4 12q0-1 1-1h9q1 0 1 1v4H4z" fill="#1f78c8" /></Icon></TaskApp>
    <TaskApp $state="open" aria-label="Browser"><Icon w={18} h={18} c="none"><path d="M9 3a7 7 0 1 0 7 7" stroke="#57b247" strokeWidth="4" /><circle cx="9" cy="10" r="2.500" fill="#57b247" /><path d="M10.500 6l1-5M12 7l3-5M13 8.500L17 6" stroke="#e2472f" strokeWidth="1.200" /></Icon></TaskApp>
    <TaskApp $state="open" aria-label="Zalo"><Icon w={20} h={19} c="none"><circle cx="10" cy="9.500" r="9" fill="#fff" /><path d="M3 3a9 9 0 1 0 15 10" stroke="#1567e0" strokeWidth="1.500" /></Icon><ZaloName>Zalo</ZaloName><Badge>2</Badge></TaskApp>
    <TaskApp aria-label="Edge"><Icon w={20} h={18} c="none"><circle cx="10" cy="9" r="9" fill="#1b80ce" /><path d="M1 8a9 9 0 0 1 18 0q0 4-4 4-3 0-3-1 2-5-3-5-5 0-8 5z" fill="#3fc6b0" /><path d="M12 11q1 3 6 2-3 5-8 5-4-1-3-6 2-4 5-1z" fill="#1156a0" /><path d="M1 11h8v7H1z" fill="#c9752b" /><path d="M1 11h8v3H1z" fill="#8a4a18" /></Icon></TaskApp>
    <TaskApp aria-label="Unikey"><Icon w={18} h={16} c="#b9a9a9"><path d="M.5 1.500h5v6h-5zM6.500 1.500h5v6h-5zM12.500 1.500h5v6h-5zM6.500 8.500h5v6h-5z" fill="#f3ecec" /><path d="M2 3.500h2M8 3.500h2M14 3.500h2M8 10.500h2" stroke="#c23c3c" /></Icon></TaskApp>
    <TaskApp $state="active" aria-label="Word"><Icon w={19} h={17} c="none"><path d="M5 0h14v5H5z" fill="#41a5ee" /><path d="M5 5h14v4H5z" fill="#2b7cd3" /><path d="M5 9h14v4H5z" fill="#185abd" /><path d="M5 13h14v4H5z" fill="#103f91" /><path d="M0 4h10v10H0z" fill="#185abd" /><path d="M2 7l1.500 5L5 7.500 6.500 12 8 7" stroke="#fff" /></Icon></TaskApp>
  </Taskbar>
);

export default function App() {
  return (
    <Shell>
      <Global />
      <Title />
      <Ribbon>
        <Tabs>
          {ribbonTabs.map((t, i) => <Tab key={i} $active={t.active} $accent={t.accent}>{t.name}</Tab>)}
          <Share><Icon w={10} h={10} c="#2b579a"><path d="M3 4H.5v5.500h8V7M3 7q0-3.500 4-3.500V1l2.500 3.500L7 7" /></Icon>Share</Share>
        </Tabs>
        <Groups>
          <Clipboard />
          <FontGroup />
          <ParagraphGroup />
          <Styles />
          <Editing />
          <Collapse><Plain $w={10} $h={10} aria-label="Collapse ribbon"><Icon w={8} h={6}><path d="M.5 5L4 1.500 7.500 5" /></Icon></Plain></Collapse>
        </Groups>
      </Ribbon>
      <Document />
      <StatusBar />
      <TaskRow />
    </Shell>
  );
}
